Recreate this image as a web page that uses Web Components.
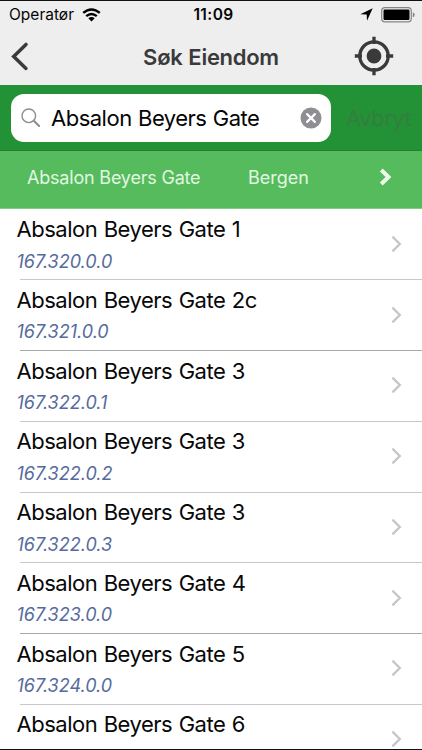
<!DOCTYPE html>
<html lang="no">
<head>
<meta charset="utf-8">
<title>Søk Eiendom</title>
<style>
body{margin:0;background:#fff;font-family:Inter,"Liberation Sans",sans-serif}
</style>
</head>
<body>
<property-app></property-app>
<script>
const define = (name, html) => customElements.define(name, class extends HTMLElement {
  constructor() {
    super();
    const t = document.createElement('template');
    t.innerHTML = html;
    this.attachShadow({mode: 'open'}).append(t.content.cloneNode(true));
  }
});

define('status-bar', `
<style>
:host{display:grid;grid-template-columns:1fr auto 1fr;align-items:center;height:28px;padding:0 6px 0 9px;color:#050505;font-size:15.5px;line-height:20px}
.l,.r{display:flex;align-items:center}
.l svg{margin-left:8px}
.r{justify-content:flex-end;gap:8px}
.t{font-weight:600;letter-spacing:.4px;font-size:15.5px;padding-left:2px}
svg{display:block;margin-bottom:1px}
</style>
<div class="l"><span>Operatør</span>
<svg width="19" height="14" viewBox="0 0 19 14"><g fill="none" stroke="#000" stroke-width="2.4"><path d="M1.2 4.9Q9.5-2.1 17.8 4.9"/><path d="M4.2 8.2Q9.5 3.7 14.8 8.2"/></g><path d="M6.3 10.3Q9.5 7.6 12.7 10.3L9.5 13.6Z"/></svg></div>
<div class="t">11:09</div>
<div class="r">
<svg width="13" height="13" viewBox="0 0 13 13"><path d="M12.7.2 7 12.7 6.7 6.6.3 6.2Z"/></svg>
<svg width="35" height="16" viewBox="0 0 35 16"><rect x=".7" y=".7" width="29.6" height="14.2" rx="3.3" fill="none" stroke="#858585" stroke-width="1.2"/><rect x="2.5" y="2.6" width="26" height="10.4" rx="1.3"/><path d="M31.8 5.3Q33.7 5.8 33.7 7.8T31.8 10.3Z" fill="#858585"/></svg>
</div>`);

define('title-bar', `
<style>
:host{display:grid;grid-template-columns:50px 1fr 50px;align-items:center;height:54px;padding:0 22px 0 10px;color:#3a3a3b}
h1{margin:1px 0 0 12px;text-align:center;font-size:22px;line-height:28px;font-weight:600;letter-spacing:-.28px;word-spacing:.6px}
svg{display:block}
.aim{justify-self:center;margin-right:2.5px}
</style>
<svg width="20" height="30" viewBox="0 0 20 30"><path d="M16 3.4 3.7 15.4 16 27.4" fill="none" stroke="currentColor" stroke-width="3.5" stroke-linecap="round"/></svg>
<h1><slot></slot></h1>
<svg class="aim" width="40" height="40" viewBox="0 0 40 40"><g fill="none" stroke="currentColor" stroke-width="3.3"><circle cx="20" cy="20" r="14.2"/><path d="M20 .8V8M20 32V39.2M.8 20H8M32 20H39.2"/></g><circle cx="20" cy="20" r="7.4" fill="currentColor"/></svg>`);

define('search-bar', `
<style>
:host{display:flex;align-items:center;box-sizing:border-box;height:66px;padding:0 11px;background:#239136;border-bottom:1px solid #277d35}
.field{display:flex;flex:none;align-items:center;box-sizing:border-box;width:320px;height:48px;border-radius:13px;background:#fff;padding:0 9px 0 10px;color:#050505}
.q{flex:1;margin-left:10px;font-size:22px;line-height:28px;letter-spacing:-.5px;word-spacing:.7px;white-space:nowrap}
.c{margin-left:15px;color:#347e41;font-size:22px;letter-spacing:-.5px}
svg{display:block}
</style>
<div class="field">
<svg width="20" height="20" viewBox="0 0 20 20"><g fill="none" stroke="#8e8e93"><circle cx="7.8" cy="7.8" r="6.8" stroke-width="1.4"/><path d="m12.8 12.8 5.3 5.2" stroke-width="2.1" stroke-linecap="round"/></g></svg>
<span class="q"><slot></slot></span>
<svg width="22" height="22" viewBox="0 0 22 22"><circle cx="11" cy="11" r="10.5" fill="#8e8e93"/><path d="m7.1 7.1 7.8 7.8m0-7.8-7.8 7.8" stroke="#fff" stroke-width="2.2" stroke-linecap="round"/></svg>
</div><span class="c">Avbryt</span>`);

define('place-bar', `
<style>
:host{display:flex;align-items:center;box-sizing:border-box;height:58px;padding:0 29px 5px 27px;background:linear-gradient(#56bb5d 57px,#82cc86 57px);color:#e1f7e2;font-size:18px;line-height:24px}
.s{width:221px;white-space:nowrap;letter-spacing:-.2px}.p{flex:1}
svg{display:block}
</style>
<span class="s"><slot name="street"></slot></span><span class="p"><slot name="place"></slot></span>
<svg width="16" height="22" viewBox="0 0 16 22"><path d="m4.3 3 7.2 7-7.2 7" fill="none" stroke="#eefaee" stroke-width="4"/></svg>`);

define('property-row', `
<style>
:host{display:flex;align-items:center;position:relative;box-sizing:border-box;height:70.75px;padding:0 19px 1px 16.5px}
.b{flex:1}
.n{font-size:22px;line-height:28px;letter-spacing:-.48px;word-spacing:.7px;color:#080808;white-space:nowrap}
.i{font-size:18px;line-height:22px;min-height:22px;margin-top:7.5px;font-style:italic;color:#566b9d}
svg{display:block}
:host::after{content:"";position:absolute;left:20px;right:0;bottom:-.5px;height:1px;background:#c8c7cc}
:host([strong])::after{background:#a9a9ac}
</style>
<div class="b"><div class="n"><slot></slot></div><div class="i"><slot name="id"></slot></div></div>
<svg width="13" height="20" viewBox="0 0 13 20"><path d="m2.4 2.6 7.4 7.4-7.4 7.4" fill="none" stroke="#c5c5ca" stroke-width="2.3"/></svg>`);

define('property-app', `
<style>
:host{display:block;box-sizing:border-box;width:422px;height:750px;overflow:hidden;border-top:1px solid #111;border-bottom:1px solid #111;background:#fff}
header{background:#eee;height:84px}
main{display:block}
</style>
<header><status-bar></status-bar><title-bar>Søk Eiendom</title-bar></header>
<search-bar>Absalon Beyers Gate</search-bar>
<place-bar><span slot="street">Absalon Beyers Gate</span><span slot="place">Bergen</span></place-bar>
<main>
<property-row>Absalon Beyers Gate 1<span slot="id">167.320.0.0</span></property-row>
<property-row strong>Absalon Beyers Gate 2c<span slot="id">167.321.0.0</span></property-row>
<property-row>Absalon Beyers Gate 3<span slot="id">167.322.0.1</span></property-row>
<property-row>Absalon Beyers Gate 3<span slot="id">167.322.0.2</span></property-row>
<property-row>Absalon Beyers Gate 3<span slot="id">167.322.0.3</span></property-row>
<property-row strong>Absalon Beyers Gate 4<span slot="id">167.323.0.0</span></property-row>
<property-row>Absalon Beyers Gate 5<span slot="id">167.324.0.0</span></property-row>
<property-row>Absalon Beyers Gate 6</property-row>
</main>`);
</script>
</body>
</html>
